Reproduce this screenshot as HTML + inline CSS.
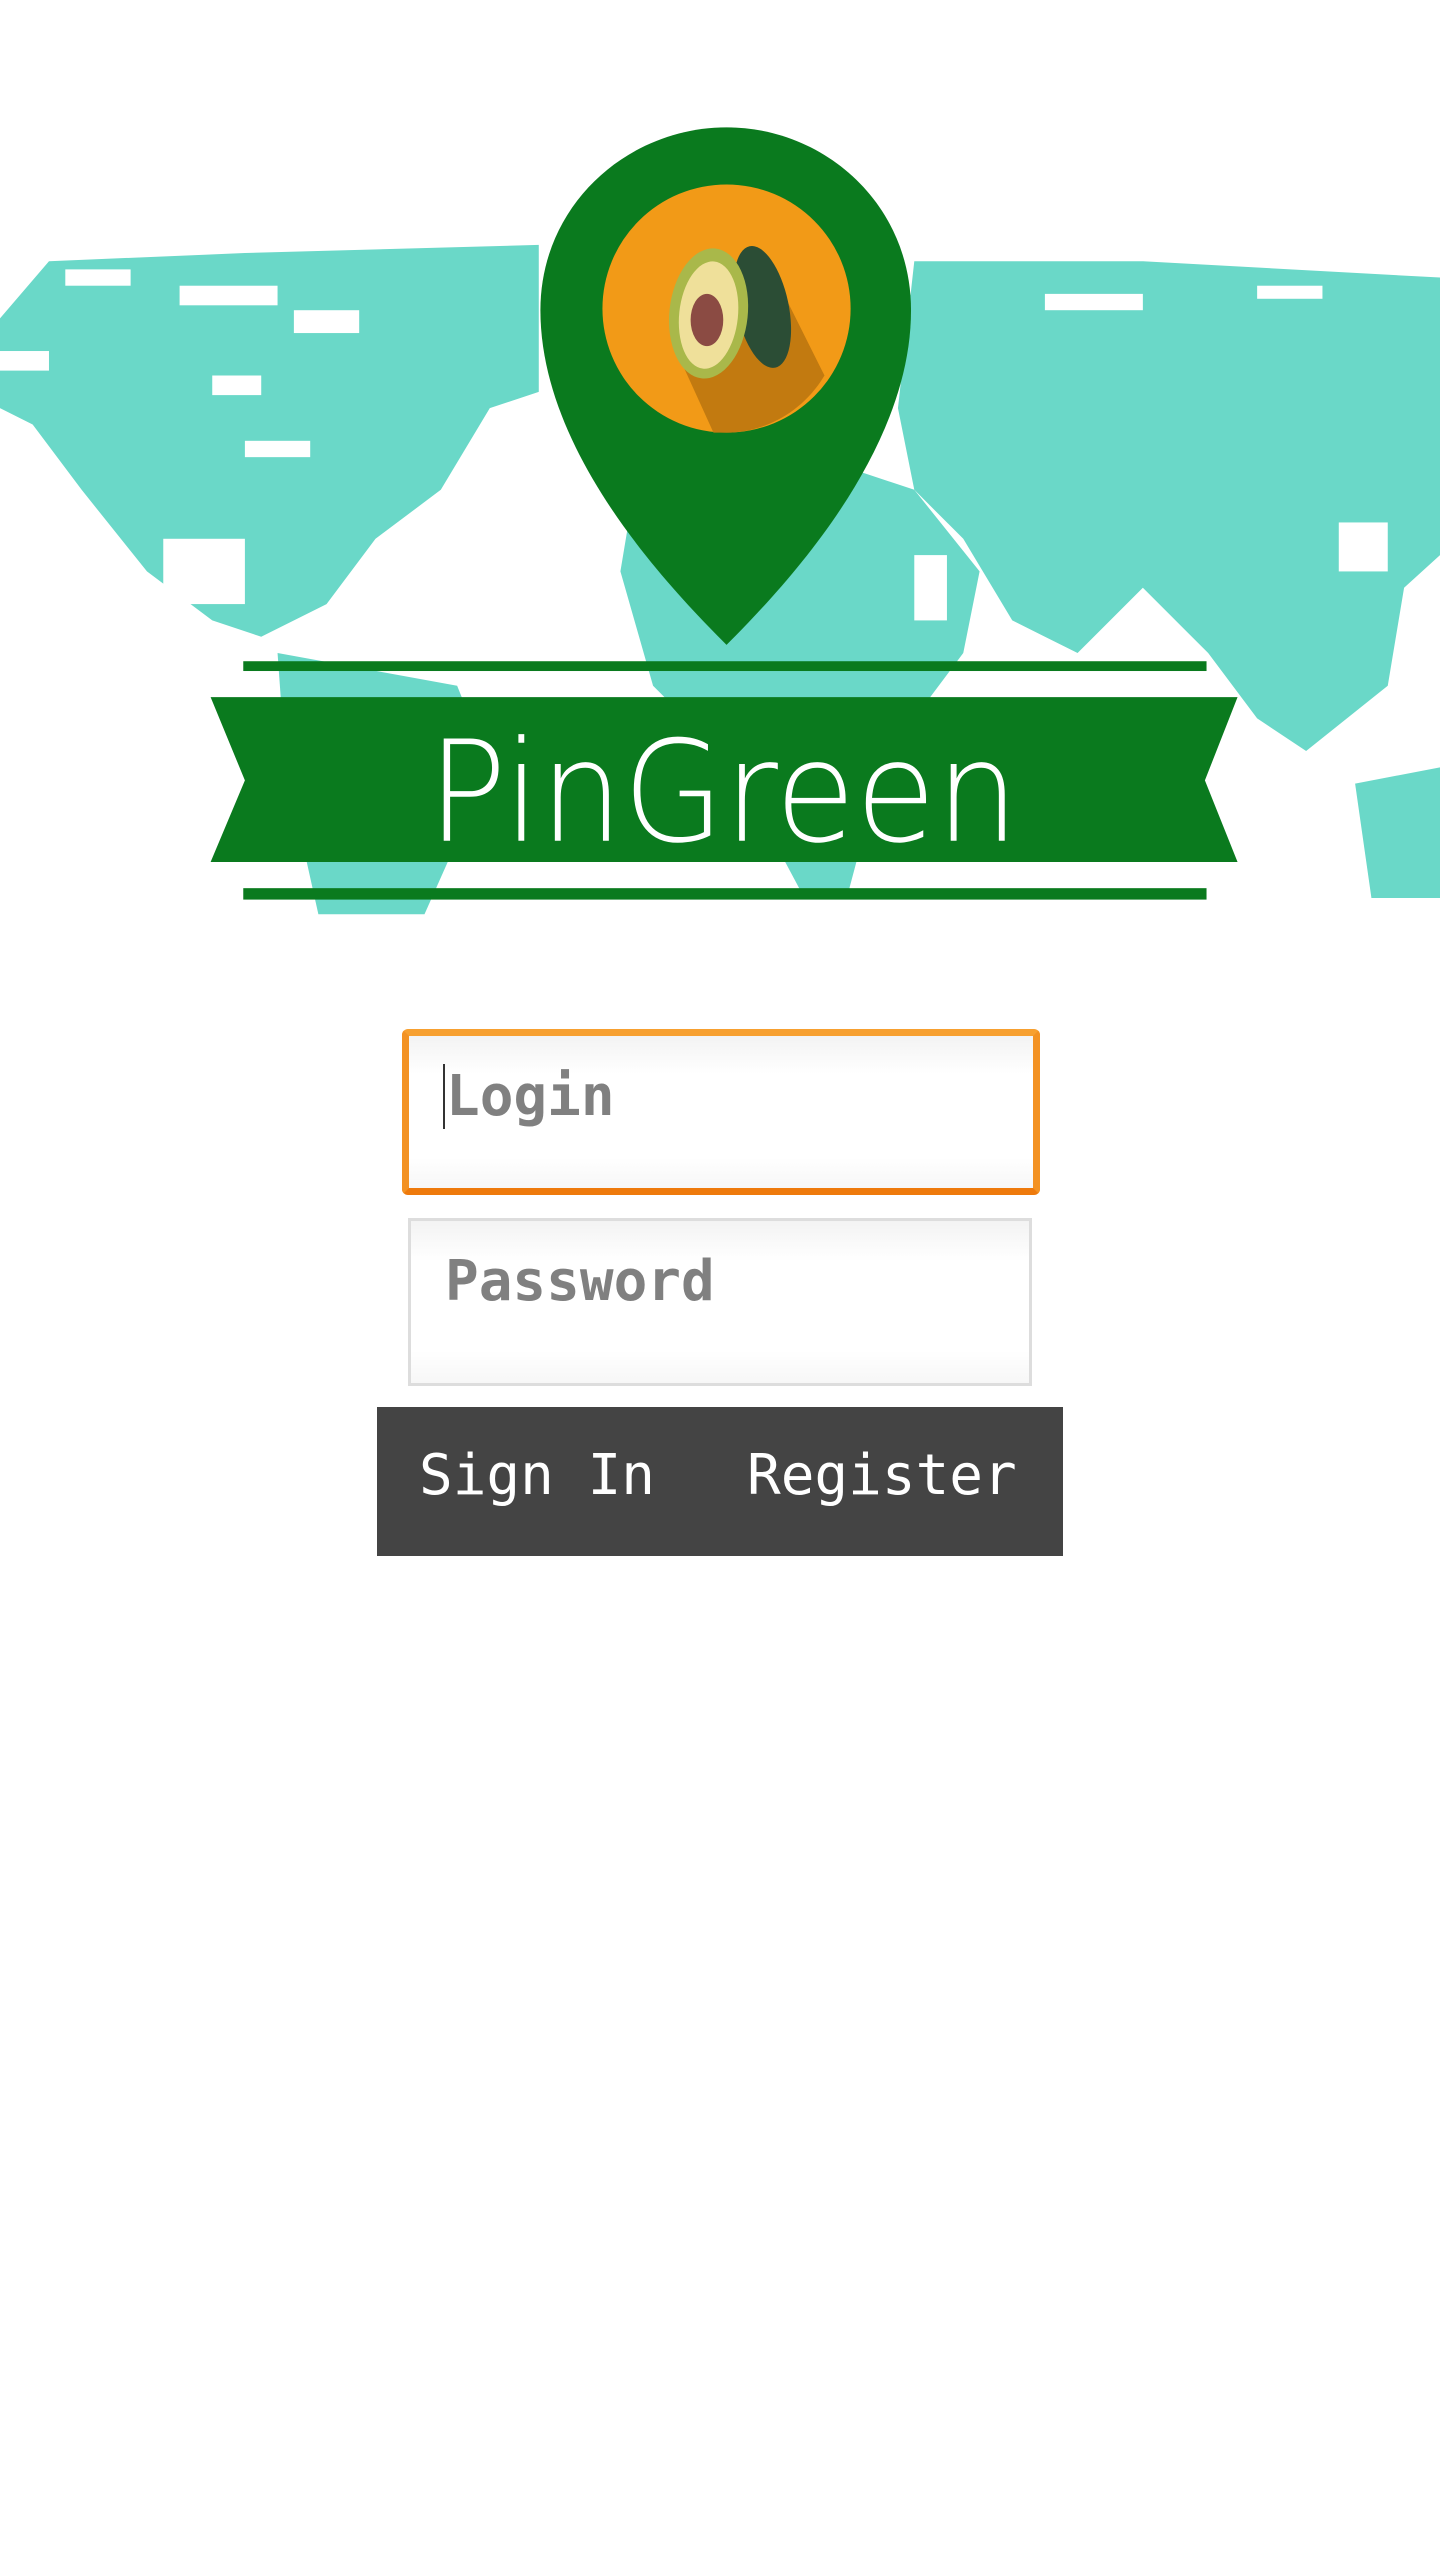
<!DOCTYPE html>
<html><head><meta charset="utf-8"><style>
html,body{margin:0;padding:0;background:#fff;width:1440px;height:2560px;overflow:hidden;position:relative}
.inp{position:absolute;box-sizing:border-box;background:linear-gradient(#f3f3f3,#fff 25%,#fff 80%,#f7f7f7);font-family:"DejaVu Sans Mono","Liberation Mono",monospace;font-weight:bold;color:#808080;font-size:56px}
.btn{position:absolute;left:377px;top:1407px;width:686px;height:149px;background:#444;color:#fff;font-family:"DejaVu Sans Mono","Liberation Mono",monospace;font-size:56px}
</style></head><body>
<svg width="1440" height="2560" viewBox="0 0 882 1568" style="position:absolute;left:0;top:0">
<g fill="#6ad8c8">
<path d="M0,195 L30,160 L150,155 L330,150 L330,240 L300,250 L270,300 L230,330 L200,370 L160,390 L130,380 L90,350 L50,300 L20,260 L0,250Z"/>
<path d="M170,400 L280,420 L300,470 L260,560 L195,560 L175,470Z"/>
<path d="M390,290 L470,270 L560,300 L600,350 L590,400 L560,440 L540,470 L520,545 L490,545 L450,470 L400,420 L380,350Z"/>
<path d="M560,160 L700,160 L882,170 L882,340 L860,360 L850,420 L800,460 L770,440 L740,400 L700,360 L660,400 L620,380 L590,330 L560,300 L550,250Z"/>
<path d="M830,480 L882,470 L882,550 L840,550Z"/>
</g>
<g fill="#fff">
<rect x="40" y="165" width="40" height="10"/><rect x="110" y="175" width="60" height="12"/><rect x="180" y="190" width="40" height="14"/>
<rect x="130" y="230" width="30" height="12"/><rect x="150" y="270" width="40" height="10"/><rect x="0" y="215" width="30" height="12"/>
<rect x="100" y="330" width="50" height="40"/><rect x="770" y="175" width="40" height="8"/><rect x="640" y="180" width="60" height="10"/>
<rect x="560" y="340" width="20" height="40"/><rect x="820" y="320" width="30" height="30"/>
</g>
<path d="M445,395 C405,355 331,275 331,190 C331,125 385,78 445,78 C505,78 558,125 558,190 C558,275 485,355 445,395Z" fill="#0a7a1e"/>
<circle cx="445" cy="189" r="76" fill="#f29a17"/>
<path d="M412,210 L470,160 L505,230 C490,255 465,265 445,265 L437,265Z" fill="#c27a10"/>
<ellipse cx="467" cy="188" rx="16" ry="38" fill="#2b4d35" transform="rotate(-12 467 188)"/>
<ellipse cx="434" cy="192" rx="24" ry="40" fill="#a9b84a" transform="rotate(6 434 192)"/>
<ellipse cx="434" cy="193" rx="18" ry="33" fill="#efe09a" transform="rotate(6 434 193)"/>
<ellipse cx="433" cy="196" rx="10" ry="16" fill="#8b4b43"/>
<rect x="149" y="405" width="590" height="6" fill="#0a7a1e"/>
<path d="M129,427 L758,427 L738,478 L758,528 L129,528 L150,478Z" fill="#0a7a1e"/>
<rect x="149" y="544" width="590" height="7" fill="#0a7a1e"/>
<text x="262" y="515" fill="#fff" font-family="DejaVu Sans, sans-serif" font-weight="200" font-size="86" textLength="362" lengthAdjust="spacingAndGlyphs">PinGreen</text>
</svg>
<div class="inp" style="left:402px;top:1029px;width:638px;height:166px;border:7px solid #f39223;border-radius:6px;border-top-color:#f7a030;border-bottom-color:#ee7a0c;padding:28px 0 0 34px"><span style="border-left:2px solid #333;padding-left:1px">Login</span></div>
<div class="inp" style="left:408px;top:1218px;width:624px;height:168px;border:3px solid #ddd;padding:28px 0 0 34px">Password</div>
<div class="btn"><span style="position:absolute;left:42px;top:36px">Sign In</span><span style="position:absolute;left:370px;top:36px">Register</span></div>
</body></html>
